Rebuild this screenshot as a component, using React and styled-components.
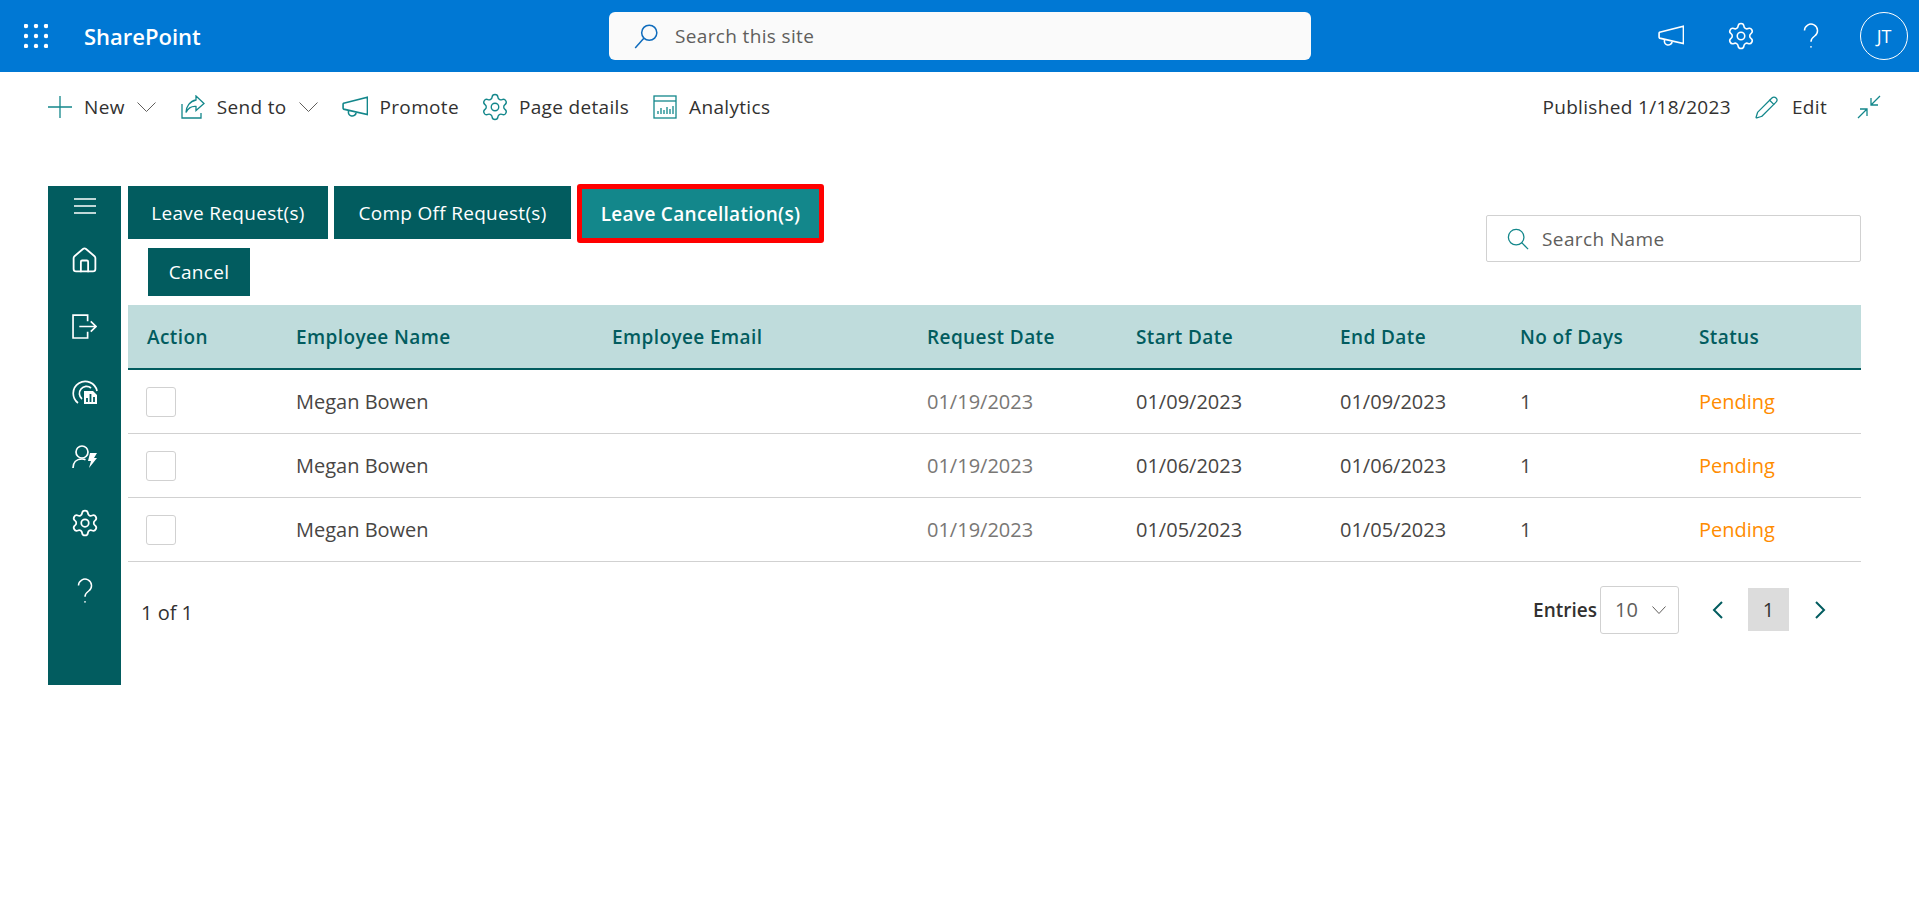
import React from 'react';
import styled, { createGlobalStyle } from 'styled-components';
import { House, Pencil, Settings } from 'lucide-react';

const GlobalStyle = createGlobalStyle`
  html, body { margin: 0; padding: 0; background: #fff; }
  body { font-family: "Open Sans", "Noto Sans", "Liberation Sans", sans-serif; color: #323130; }
  * { box-sizing: border-box; }
`;

const TEAL = '#025c5f';
const ACCENT = '#13878b';

const Page = styled.div`
  width: 1919px;
  height: 899px;
  overflow: hidden;
`;

const SuiteBar = styled.header`
  height: 72px;
  background: #0078d4;
  color: #fff;
  display: grid;
  grid-template-columns: 609px 702px 1fr;
  align-items: center;
`;

const Brand = styled.div`
  display: flex;
  align-items: center;
  padding-left: 24px;
  gap: 36px;
`;

const BrandName = styled.span`
  font-size: 22px;
  font-weight: 600;
`;

const SiteSearch = styled.div`
  height: 48px;
  background: #fafafa;
  border-radius: 6px;
  display: flex;
  align-items: center;
  gap: 16px;
  padding-left: 24px;
  font-size: 19px;
  letter-spacing: 0.35px;
  color: #605e5c;
`;

const SuiteActions = styled.div`
  display: flex;
  align-items: center;
  justify-content: flex-end;
  padding-right: 11px;
  gap: 45px;
`;

const Avatar = styled.div`
  width: 48px;
  height: 48px;
  border: 1px solid #fff;
  border-radius: 50%;
  margin-left: -9px;
  display: flex;
  align-items: center;
  justify-content: center;
  font-size: 18px;
`;

const CommandBar = styled.div`
  height: 70px;
  display: flex;
  align-items: center;
  justify-content: space-between;
  padding: 0 38px 0 48px;
`;

const CommandGroup = styled.div`
  display: flex;
  align-items: center;
`;

const Command = styled.span`
  display: inline-flex;
  align-items: center;
  gap: ${(props) => props.$gap || 12}px;
  margin-right: ${(props) => props.$after || 0}px;
  font-size: 19px;
  letter-spacing: 0.33px;
  white-space: nowrap;
  color: #323130;
`;

const Gear = styled(Settings)`
  margin: -3px;
  flex: none;
`;

const Workspace = styled.div`
  display: flex;
  gap: 7px;
  padding: 44px 58px 0 48px;
`;

const SideNav = styled.nav`
  width: 73px;
  height: 499px;
  flex: none;
  background: ${TEAL};
  color: #fff;
  display: flex;
  flex-direction: column;
  align-items: center;
  padding-top: 12px;
`;

const NavSlot = styled.div`
  height: 65.5px;
  display: flex;
  align-items: center;
  justify-content: center;
  width: 100%;
`;

const MenuSlot = styled(NavSlot)`
  height: 30px;
  align-items: flex-start;
`;

const HelpSlot = styled(NavSlot)`
  padding-top: 5px;
`;

const Main = styled.main`
  flex: 1;
  min-width: 0;
`;

const TopRow = styled.div`
  display: flex;
  justify-content: space-between;
  height: 119px;
`;

const Tabs = styled.div`
  display: flex;
  align-items: flex-start;
  gap: 6px;
  height: 53px;
`;

const Tab = styled.button`
  height: ${(props) => (props.$active ? 59 : 53)}px;
  width: ${(props) => props.$w}px;
  margin-top: ${(props) => (props.$active ? -2 : 0)}px;
  border: ${(props) => (props.$active ? '5px solid #ff0000' : '0')};
  border-radius: ${(props) => (props.$active ? 3 : 0)}px;
  padding: 0;
  background: ${(props) => (props.$active ? ACCENT : TEAL)};
  color: #fff;
  font: ${(props) => (props.$active ? 600 : 400)} 19px "Open Sans", sans-serif;
  letter-spacing: 0.3px;
`;

const CancelButton = styled.button`
  display: block;
  width: 102px;
  height: 48px;
  margin: 9px 0 0 20px;
  border: 0;
  padding: 0;
  background: ${TEAL};
  color: #fff;
  font: 400 19px "Open Sans", sans-serif;
  letter-spacing: 0.3px;
`;

const NameSearch = styled.div`
  width: 375px;
  height: 47px;
  margin-top: 29px;
  border: 1px solid #d1d1d1;
  border-radius: 2px;
  display: flex;
  align-items: center;
  gap: 13px;
  padding-left: 20px;
  font-size: 19px;
  letter-spacing: 0.4px;
  color: #605e5c;
`;

const columns = '149px 316px 315px 209px 204px 180px 179px 181px';

const HeadRow = styled.div`
  display: grid;
  grid-template-columns: ${columns};
  align-items: center;
  height: 65px;
  background: #bfdcdc;
  border-bottom: 2px solid ${TEAL};
  color: ${TEAL};
  font-size: 19px;
  font-weight: 600;
  letter-spacing: 0.4px;
`;

const Row = styled.div`
  display: grid;
  grid-template-columns: ${columns};
  align-items: center;
  height: 64px;
  border-bottom: 1px solid #d1d1d1;
  font-size: 20px;
  color: #484644;
`;

const Cell = styled.div`
  padding-left: 19px;
  color: ${(props) => props.$color || 'inherit'};
`;

const CheckBox = styled.span`
  display: block;
  width: 30px;
  height: 30px;
  margin-left: -1px;
  border: 1px solid #d1d1d1;
  border-radius: 3px;
  background: #fff;
`;

const Footer = styled.div`
  display: flex;
  align-items: center;
  justify-content: space-between;
  height: 95px;
  padding-left: 13px;
  font-size: 20px;
`;

const PageCount = styled.span`
  padding-top: 5px;
`;

const Pager = styled.div`
  display: flex;
  align-items: center;
  padding-right: 35px;
`;

const EntriesLabel = styled.span`
  font-size: 19px;
  font-weight: 600;
  margin-right: 3px;
`;

const EntriesSelect = styled.div`
  width: 79px;
  height: 48px;
  border: 1px solid #d1d1d1;
  border-radius: 3px;
  display: flex;
  align-items: center;
  justify-content: space-between;
  padding: 0 12px 0 14px;
  color: #605e5c;
  margin-right: 33px;
`;

const PageArrow = styled.svg`
  width: 11px;
  height: 18px;
  flex: none;
  fill: none;
  stroke: ${TEAL};
  stroke-width: 2;
`;

const PageNumber = styled.span`
  width: 41px;
  height: 43px;
  background: #dcdcdc;
  display: flex;
  align-items: center;
  justify-content: center;
  margin: 0 26px 0 25px;
`;

const Chevron = ({ w, h, color = '#605e5c' }) => (
  <svg width={w} height={h} viewBox={`0 0 ${w} ${h}`} fill="none" stroke={color} strokeWidth="1">
    <path d={`M0.5 0.5 ${w / 2} ${h - 0.5} ${w - 0.5} 0.5`} />
  </svg>
);

const Glyph = ({ size = 24, color = 'currentColor', width = 1.3, children }) => (
  <svg width={size} height={size} viewBox="0 0 24 24" fill="none" stroke={color} strokeWidth={width}>
    {children}
  </svg>
);

const WaffleIcon = () => (
  <svg width="24" height="24" viewBox="0 0 24 24" fill="#fff">
    {[2, 12, 22].map((y) => [2, 12, 22].map((x) => <circle key={`${x}-${y}`} cx={x} cy={y} r="2.2" />))}
  </svg>
);

const SearchGlassFlipped = () => (
  <Glyph size={26} color="#0f6cbd" width={1.4}>
    <circle cx="15" cy="9" r="7" />
    <path d="M10 14 2 23" />
  </Glyph>
);

const MegaphoneIcon = ({ color = 'currentColor' }) => (
  <Glyph size={26} color={color} width={1.5}>
    <path d="M1.5 8.5 23.5 3v16L1.5 14a1.5 1.5 0 0 1 -0.5-1.2v-3a1.5 1.5 0 0 1 .5-1.3z" />
    <path d="M6 15.5v.5a3.5 3.5 0 0 0 7 1.5" />
  </Glyph>
);

const HelpIcon = ({ size = 26, color = 'currentColor' }) => (
  <Glyph size={size} color={color} width={1.4}>
    <path d="M6 7a6 6 0 1 1 9.4 5c-2.2 1.5-3.4 2.8-3.4 5.2" />
    <circle cx="12" cy="22" r="0.8" fill={color} stroke="none" />
  </Glyph>
);

const PlusIcon = () => (
  <Glyph color={ACCENT} width={1.3}>
    <path d="M12 1v22M0 12h24" />
  </Glyph>
);

const SendToIcon = () => (
  <Glyph color={ACCENT} width={1.3}>
    <path d="M1 9v14h19v-5" />
    <path d="M15 1l8 7.5-8 7v-4c-5-.5-8 2-10 6 0-6 4-11.5 10-12.5z" />
  </Glyph>
);

const AnalyticsIcon = () => (
  <Glyph color={ACCENT} width={1.3}>
    <rect x="1" y="1" width="22" height="22" />
    <path d="M1 6h22" />
    <path d="M5 19v-3M8 19v-6M11 19v-4M14 19v-7M17 19v-5M20 19v-8" />
  </Glyph>
);

const CollapseIcon = () => (
  <Glyph color={ACCENT} width={1.3}>
    <path d="M23 1 14 10M14 3v7h7" />
    <path d="M1 23l9-9M3 14h7v7" />
  </Glyph>
);

const MenuIcon = () => (
  <svg width="22" height="16" viewBox="0 0 22 16" stroke="#fff" strokeWidth="1.4">
    <path d="M0 1h22M0 8h22M0 15h22" />
  </svg>
);

const ExitIcon = () => (
  <Glyph size={25} width={1.6}>
    <path d="M15 7V1H1v22h14v-6" />
    <path d="M7 12h16M18 7l5 5-5 5" />
  </Glyph>
);

const ReportIcon = () => (
  <svg width="26" height="26" viewBox="0 0 26 26" fill="none" stroke="#fff" strokeWidth="1.7">
    <path d="M6 24A12 12 0 1 1 25 12" />
    <path d="M10 20A7 7 0 1 1 19 9" />
    <path d="M12 12h9l4 4v9H12z" fill="#fff" stroke="none" />
    <path d="M15 23v-4M18.5 23v-8M22 23v-5" stroke={TEAL} strokeWidth="1.8" />
  </svg>
);

const PersonBoltIcon = () => (
  <svg width="26" height="24" viewBox="0 0 26 24" fill="none" stroke="#fff" strokeWidth="1.7">
    <circle cx="10" cy="7" r="6" />
    <path d="M1 23c0-5 3-9 9-9 1.5 0 2.5.2 3.5.7" />
    <path d="M18 8h7l-3 5h3l-8 10 2-7h-3z" fill="#fff" stroke="none" />
  </svg>
);

const SearchIcon = () => (
  <Glyph size={22} color={ACCENT} width={1.4}>
    <circle cx="10" cy="10" r="8.5" />
    <path d="M16 16l7 7" />
  </Glyph>
);

const requests = [
  { date: '01/09/2023' },
  { date: '01/06/2023' },
  { date: '01/05/2023' },
];

const App = () => (
  <Page>
    <GlobalStyle />
    <SuiteBar>
      <Brand>
        <WaffleIcon />
        <BrandName>SharePoint</BrandName>
      </Brand>
      <SiteSearch>
        <SearchGlassFlipped />
        Search this site
      </SiteSearch>
      <SuiteActions>
        <MegaphoneIcon />
        <Gear size={30} strokeWidth={1.25} />
        <HelpIcon />
        <Avatar>JT</Avatar>
      </SuiteActions>
    </SuiteBar>

    <CommandBar>
      <CommandGroup>
        <Command $after={25} $gap={12}>
          <PlusIcon />
          New
          <Chevron w={19} h={10} />
        </Command>
        <Command $after={24}>
          <SendToIcon />
          Send to
          <Chevron w={19} h={10} />
        </Command>
        <Command $after={24}>
          <MegaphoneIcon color={ACCENT} />
          Promote
        </Command>
        <Command $after={24}>
          <Gear size={30} strokeWidth={1.1} color={ACCENT} />
          Page details
        </Command>
        <Command>
          <AnalyticsIcon />
          Analytics
        </Command>
      </CommandGroup>
      <CommandGroup>
        <Command $after={23}>Published 1/18/2023</Command>
        <Command $after={30} $gap={13}>
          <Pencil size={25} strokeWidth={1.2} color={ACCENT} />
          Edit
        </Command>
        <CollapseIcon />
      </CommandGroup>
    </CommandBar>

    <Workspace>
      <SideNav>
        <MenuSlot>
          <MenuIcon />
        </MenuSlot>
        <NavSlot>
          <House size={29} strokeWidth={1.5} />
        </NavSlot>
        <NavSlot>
          <ExitIcon />
        </NavSlot>
        <NavSlot>
          <ReportIcon />
        </NavSlot>
        <NavSlot>
          <PersonBoltIcon />
        </NavSlot>
        <NavSlot>
          <Gear size={30} strokeWidth={1.4} />
        </NavSlot>
        <HelpSlot>
          <HelpIcon />
        </HelpSlot>
      </SideNav>

      <Main>
        <TopRow>
          <div>
            <Tabs>
              <Tab $w={200}>Leave Request(s)</Tab>
              <Tab $w={237}>Comp Off Request(s)</Tab>
              <Tab $w={247} $active>
                Leave Cancellation(s)
              </Tab>
            </Tabs>
            <CancelButton>Cancel</CancelButton>
          </div>
          <NameSearch>
            <SearchIcon />
            Search Name
          </NameSearch>
        </TopRow>

        <HeadRow>
          <Cell>Action</Cell>
          <Cell>Employee Name</Cell>
          <Cell>Employee Email</Cell>
          <Cell>Request Date</Cell>
          <Cell>Start Date</Cell>
          <Cell>End Date</Cell>
          <Cell>No of Days</Cell>
          <Cell>Status</Cell>
        </HeadRow>
        {requests.map((r) => (
          <Row key={r.date}>
            <Cell>
              <CheckBox />
            </Cell>
            <Cell>Megan Bowen</Cell>
            <Cell />
            <Cell $color="#797775">01/19/2023</Cell>
            <Cell>{r.date}</Cell>
            <Cell>{r.date}</Cell>
            <Cell>1</Cell>
            <Cell $color="#ff8c00">Pending</Cell>
          </Row>
        ))}

        <Footer>
          <PageCount>1 of 1</PageCount>
          <Pager>
            <EntriesLabel>Entries</EntriesLabel>
            <EntriesSelect>
              10
              <Chevron w={14} h={8} />
            </EntriesSelect>
            <PageArrow viewBox="0 0 11 18">
              <path d="M10 1 2 9l8 8" />
            </PageArrow>
            <PageNumber>1</PageNumber>
            <PageArrow viewBox="0 0 11 18">
              <path d="M1 1l8 8-8 8" />
            </PageArrow>
          </Pager>
        </Footer>
      </Main>
    </Workspace>
  </Page>
);

export default App;
